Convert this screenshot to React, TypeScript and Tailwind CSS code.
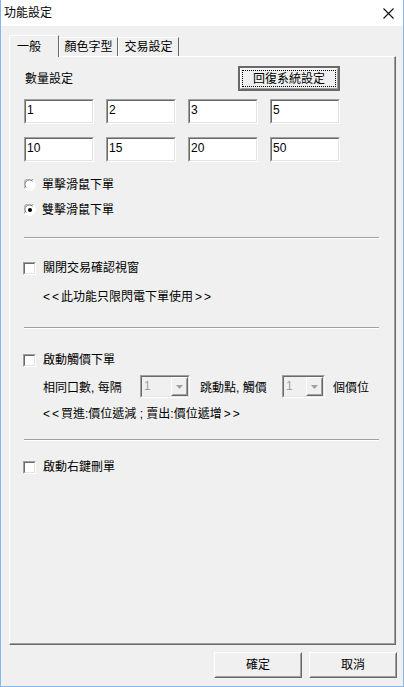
import React from "react";

const font = "font-['Liberation_Sans','Noto_Sans_CJK_TC',sans-serif]";

function Sunken({ className, children }: { className?: string; children?: React.ReactNode }) {
  return (
    <div
      className={`${className ?? ""} border border-t-[#a0a0a0] border-l-[#a0a0a0] border-r-white border-b-white`}
    >
      <div className="h-full w-full border border-t-[#696969] border-l-[#696969] border-r-[#e3e3e3] border-b-[#e3e3e3]">
        {children}
      </div>
    </div>
  );
}

function Raised({ className, children }: { className?: string; children?: React.ReactNode }) {
  return (
    <div
      className={`${className ?? ""} bg-[#f0f0f0] border border-t-white border-l-white border-r-[#696969] border-b-[#696969]`}
    >
      <div className="h-full w-full border border-t-[#f0f0f0] border-l-[#f0f0f0] border-r-[#a0a0a0] border-b-[#a0a0a0] flex items-center justify-center">
        {children}
      </div>
    </div>
  );
}

function QtyInput({ value }: { value: string }) {
  return (
    <Sunken className="w-[70px] h-[25px]">
      <div className="h-full bg-white pl-[1px] pt-[2px] text-[12px] leading-[14px] text-black">{value}</div>
    </Sunken>
  );
}

function Radio({ checked, label }: { checked?: boolean; label: string }) {
  return (
    <div className="flex items-center h-[16px]">
      <svg width="12" height="12" viewBox="0 0 12 12" className="shrink-0">
        <circle cx="6" cy="6" r="5.5" fill="white" />
        <path d="M1.2 9.5 A5.5 5.5 0 0 1 9.5 1.2" stroke="#a0a0a0" fill="none" />
        <path d="M2.2 8.6 A4.5 4.5 0 0 1 8.6 2.2" stroke="#696969" fill="none" />
        <path d="M9.5 1.2 A5.5 5.5 0 0 1 1.2 9.5" stroke="#ffffff" fill="none" />
        {checked && <circle cx="6" cy="6" r="2" fill="black" />}
      </svg>
      <span className="ml-[6px] text-[12px] leading-[16px]">{label}</span>
    </div>
  );
}

function Check({ label }: { label: string }) {
  return (
    <div className="flex items-center h-[16px] -ml-[1px]">
      <Sunken className="w-[13px] h-[13px] shrink-0">
        <div className="h-full bg-white" />
      </Sunken>
      <span className="ml-[7px] text-[12px] leading-[16px]">{label}</span>
    </div>
  );
}

function Combo({ className }: { className?: string }) {
  return (
    <Sunken className={`${className ?? ""} h-[23px]`}>
      <div className="h-full flex bg-[#f0f0f0]">
        <span className="flex-1 pl-[2px] pt-[1px] text-[12px] leading-[16px] text-[#a0a0a0]">1</span>
        <Raised className="w-[17px] h-full">
          <svg width="7" height="4" viewBox="0 0 7 4">
            <path d="M0 0 H7 L3.5 4 Z" fill="#a0a0a0" />
          </svg>
        </Raised>
      </div>
    </Sunken>
  );
}

function Separator({ className }: { className?: string }) {
  return <div className={`${className ?? ""} w-[355px] border-t border-t-[#a0a0a0] border-b border-b-white`} />;
}

export default function App() {
  return (
    <div
      className={`${font} w-[404px] h-[687px] flex flex-col border-l border-r border-b border-[#86b7ea] text-black`}
    >
      {/* Title bar */}
      <div className="h-[26px] bg-white flex items-center justify-between pl-[3px] pr-[9px] shrink-0">
        <span className="text-[12px] leading-[16px]">功能設定</span>
        <svg width="11" height="11" viewBox="0 0 11 11">
          <path d="M0.5 0.5 L10.5 10.5 M10.5 0.5 L0.5 10.5" stroke="#111" strokeWidth="1.1" />
        </svg>
      </div>

      <div className="flex-1 flex flex-col bg-[#f0f0f0]">
        {/* Tabs */}
        <div className="mt-[9px] ml-[8px] h-[21px] flex items-end">
          <div className="relative z-10 -mb-[1px] h-[22px] w-[50px] bg-[#f0f0f0] border-t border-l border-t-white border-l-white border-r border-r-[#696969] pl-[7px] pt-[3px] text-[12px] leading-[16px]">
            一般
          </div>
          <div className="h-[19px] w-[59px] border-t border-l border-t-white border-l-white border-r border-r-[#696969] text-center pt-[1px] text-[12px] leading-[16px]">
            顏色字型
          </div>
          <div className="h-[19px] w-[61px] border-t border-l border-t-white border-l-white border-r border-r-[#696969] text-center pt-[1px] text-[12px] leading-[16px]">
            交易設定
          </div>
        </div>

        {/* Panel */}
        <div className="flex-1 ml-[8px] mr-[7px] border-t border-l border-t-white border-l-white border-r border-b border-r-[#696969] border-b-[#696969]">
          <div className="h-full border-r border-b border-r-[#a0a0a0] border-b-[#a0a0a0] pl-[14px] flex flex-col text-[12px]">
            <div className="mt-[9px] w-[316px] flex items-center justify-between">
              <span className="ml-[1px] leading-[16px] mt-[1px]">數量設定</span>
              <div className="w-[102px] h-[25px] border-2 border-[#696969] bg-[#f0f0f0]">
                <div className="h-full border border-t-white border-l-white border-r-[#a0a0a0] border-b-[#a0a0a0] p-[1px]">
                  <div className="h-full border border-dotted border-black flex items-center justify-center leading-[16px]">
                    回復系統設定
                  </div>
                </div>
              </div>
            </div>

            <div className="mt-[8px] flex gap-[12px]">
              <QtyInput value="1" />
              <QtyInput value="2" />
              <QtyInput value="3" />
              <QtyInput value="5" />
            </div>
            <div className="mt-[13px] flex gap-[12px]">
              <QtyInput value="10" />
              <QtyInput value="15" />
              <QtyInput value="20" />
              <QtyInput value="50" />
            </div>

            <div className="mt-[15px]">
              <Radio label="單擊滑鼠下單" />
            </div>
            <div className="mt-[9px]">
              <Radio checked label="雙擊滑鼠下單" />
            </div>

            <Separator className="mt-[19px]" />

            <div className="mt-[21px]">
              <Check label="關閉交易確認視窗" />
            </div>
            <div className="mt-[13px] ml-[19px] leading-[16px]">
              <span className="tracking-[2px]">&lt;&lt;</span>此功能只限閃電下單使用<span className="ml-[2px] tracking-[2px]">&gt;&gt;</span>
            </div>

            <Separator className="mt-[22px]" />

            <div className="mt-[23px]">
              <Check label="啟動觸價下單" />
            </div>
            <div className="mt-[7px] ml-[19px] flex items-center h-[23px]">
              <span className="w-[97px] leading-[16px] mt-[3px]">相同口數, 每隔</span>
              <Combo className="w-[50px]" />
              <span className="ml-[10px] w-[82px] leading-[16px] mt-[3px]">跳動點, 觸價</span>
              <Combo className="w-[43px]" />
              <span className="ml-[8px] leading-[16px] mt-[3px]">個價位</span>
            </div>
            <div className="mt-[8px] ml-[19px] leading-[16px]">
              <span className="tracking-[2px]">&lt;&lt;</span>買進:價位遞減 ; 賣出:價位遞增<span className="ml-[2px] tracking-[2px]">&gt;&gt;</span>
            </div>

            <Separator className="mt-[17px]" />

            <div className="mt-[18px]">
              <Check label="啟動右鍵刪單" />
            </div>
          </div>
        </div>

        {/* Buttons */}
        <div className="mt-[7px] mb-[8px] mr-[6px] flex justify-end gap-[7px]">
          <Raised className="w-[88px] h-[26px]">
            <span className="text-[12px] leading-[16px]">確定</span>
          </Raised>
          <Raised className="w-[88px] h-[26px]">
            <span className="text-[12px] leading-[16px]">取消</span>
          </Raised>
        </div>
      </div>
    </div>
  );
}
